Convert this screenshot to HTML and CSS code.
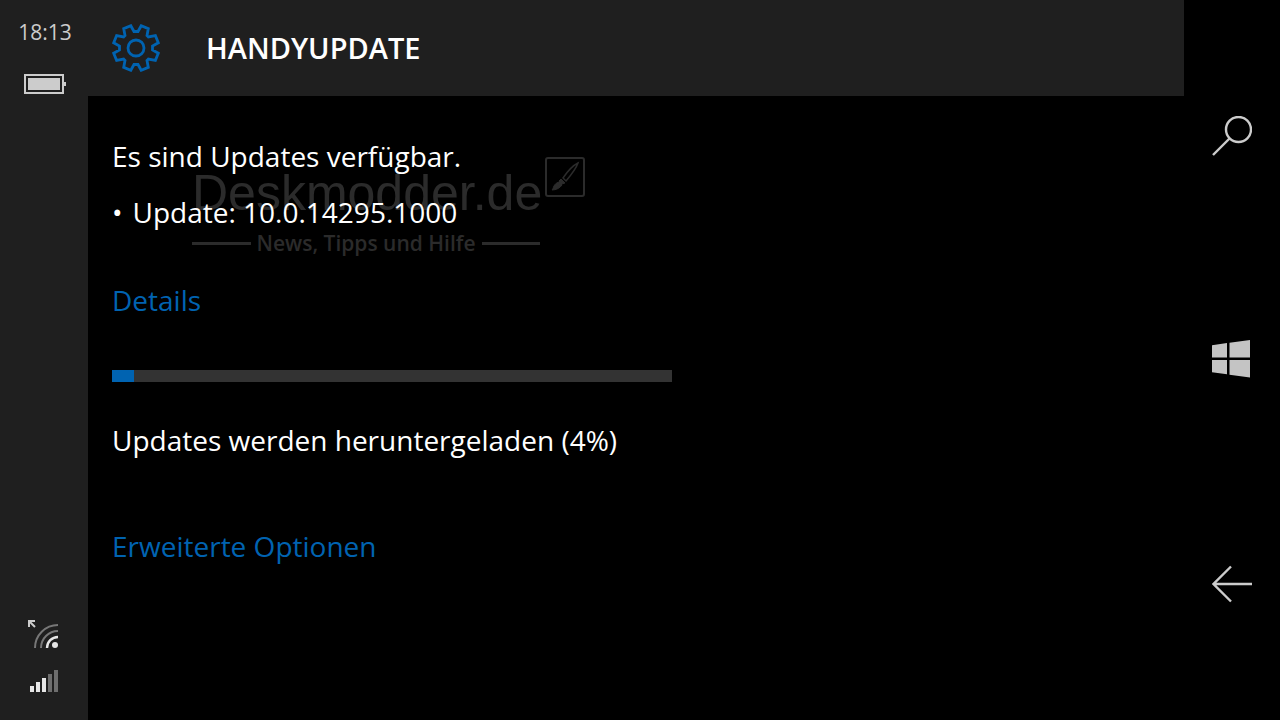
FILE: index.html
```html
<!DOCTYPE html>
<html lang="de">
<head>
    <meta charset="UTF-8">
    <meta name="viewport" content="width=device-width, initial-scale=1.0">
    <title>Handyupdate</title>
    <link rel="stylesheet" href="styles.css">
</head>
<body>
    <aside id="status-bar">
        <div class="status-group">
            <time>18:13</time>
            <svg width="42" height="20" viewBox="0 0 42 20" fill="#ccc" role="img" aria-label="Akku">
                <path d="M0 0H40V20H0ZM2 2V18H38V2Z" fill-rule="evenodd"/>
                <rect x="4" y="4" width="32" height="12"/>
                <rect x="40" y="8" width="2" height="4"/>
            </svg>
        </div>
        <div class="status-group">
            <svg width="32" height="30" viewBox="0 0 32 30" fill="none" stroke-width="2" role="img" aria-label="WLAN">
                <path d="M7 28A23 23 0 0 1 30 5M13 28A17 17 0 0 1 30 11" stroke="#777"/>
                <path d="M19 28A11 11 0 0 1 30 17" stroke="#e6e6e6" stroke-width="2.4"/>
                <circle cx="27" cy="25" r="3" fill="#e6e6e6"/>
                <path d="M1 7V1H7M1 1L7 7" stroke="#ccc"/>
            </svg>
            <svg width="28" height="22" viewBox="0 0 28 22" role="img" aria-label="Mobilfunk">
                <path d="M0 16H4V22H0ZM6 12H10V22H6ZM12 8H16V22H12Z" fill="#e6e6e6"/>
                <path d="M18 4H22V22H18ZM24 0H28V22H24Z" fill="#6e6e6e"/>
            </svg>
        </div>
    </aside>

    <div id="page">
        <header>
            <svg width="48" height="48" viewBox="-24 -24 48 48" fill="none" stroke="#0063b1" stroke-width="2.8" aria-hidden="true">
                <path d="M2 -16.5L5.2 -22.3L12.3 -19.4L11 -12.4L12.4 -11L19.4 -12.3L22.3 -5.2L16.5 -2V2L22.3 5.2L19.4 12.3L12.4 11L11 12.4L12.3 19.4L5.2 22.3L2 16.5H-2L-5.2 22.3L-12.3 19.4L-11 12.4L-12.4 11L-19.4 12.3L-22.3 5.2L-16.5 2V-2L-22.3 -5.2L-19.4 -12.3L-12.4 -11L-11 -12.4L-12.3 -19.4L-5.2 -22.3L-2 -16.5Z"/>
                <circle r="8"/>
            </svg>
            <h1>HANDYUPDATE</h1>
        </header>

        <main>
            <div id="watermark">
                <div class="brand">Deskmodder.de</div>
                <div class="slogan">News, Tipps und Hilfe</div>
                <svg width="40" height="40" viewBox="0 0 40 40" fill="none" stroke="#2b2b2b" aria-hidden="true">
                    <rect x="1" y="1" width="38" height="38" rx="2" stroke-width="2"/>
                    <path d="M33 6C27 9 22 15 18 21L21 24C26 18 31 12 33 6Z" stroke-width="1.5"/>
                    <path d="M16 22L20 26L17 27L14 24Z" fill="#2b2b2b"/>
                    <path d="M14 25L17 28C15 31 11 33 7 33C9 31 8 27 14 25Z" fill="#2b2b2b"/>
                </svg>
            </div>

            <p>Es sind Updates verfügbar.</p>
            <ul>
                <li>Update: 10.0.14295.1000</li>
            </ul>
            <a class="details" href="#details">Details</a>
            <progress id="download" value="4" max="100"></progress>
            <label for="download">Updates werden heruntergeladen (4%)</label>
            <a class="options" href="#optionen">Erweiterte Optionen</a>
        </main>
    </div>

    <nav>
        <button type="button" aria-label="Suchen">
            <svg width="40" height="40" viewBox="0 0 40 40" fill="none" stroke="#ccc" stroke-width="2.4">
                <circle cx="26.5" cy="13.5" r="12.5"/>
                <path d="M17.5 22.5L1 39"/>
            </svg>
        </button>
        <button type="button" aria-label="Start">
            <svg width="40" height="40" viewBox="0 0 40 40" fill="#c4c4c4">
                <path d="M0 5.2L15 3V17.5H0ZM17.5 2.7L38 0V17.5H17.5ZM0 20H15V34.3L0 32.2ZM17.5 20H38V37.5L17.5 34.7Z"/>
            </svg>
        </button>
        <button type="button" aria-label="Zurück">
            <svg width="40" height="40" viewBox="0 0 40 40" fill="none" stroke="#ccc" stroke-width="2.4">
                <path d="M40 20H2M19 2.5L1.5 20L19 37.5"/>
            </svg>
        </button>
    </nav>
</body>
</html>
```
FILE: styles.css
```css
* {
    box-sizing: border-box;
}
body {
    display: grid;
    grid-template-columns: 88px 1fr 96px;
    min-height: 100vh;
    margin: 0;
    background-color: #000;
    color: #fff;
    font-family: "Segoe UI", "Open Sans", "Noto Sans", sans-serif;
    font-size: 28px;
    line-height: 40px;
}
svg {
    display: block;
}

/* Left status bar */
#status-bar {
    display: flex;
    flex-direction: column;
    justify-content: space-between;
    padding: 12px 0 28px 2px;
    background-color: #1f1f1f;
}
.status-group {
    display: flex;
    flex-direction: column;
    align-items: center;
    gap: 22px;
}
#status-bar time {
    color: #ccc;
    font-size: 21px;
}
.status-group:last-child {
    align-items: flex-end;
    gap: 20px;
    padding-right: 30px;
}
.status-group:last-child svg:first-child {
    margin-right: -2px;
}

/* Content */
header {
    display: flex;
    align-items: center;
    gap: 46px;
    height: 96px;
    padding: 0 24px;
    background-color: #1f1f1f;
}
h1 {
    margin: 0;
    font-size: 29px;
    font-weight: 600;
}
main {
    position: relative;
    z-index: 0;
    display: flex;
    flex-direction: column;
    align-items: flex-start;
    padding: 40px 24px;
}
main p {
    margin: 0 0 16px;
}
main ul {
    margin: 0 0 48px;
    padding: 0;
    list-style: none;
}
main li {
    display: flex;
    gap: 10px;
}
main li::before {
    content: "•";
}
a {
    color: #0063b1;
    text-decoration: none;
}
.details {
    margin-bottom: 50px;
}
progress {
    display: block;
    width: 560px;
    max-width: 100%;
    height: 12px;
    margin-bottom: 38px;
    border: none;
    background-color: #333;
    appearance: none;
}
progress::-webkit-progress-bar {
    background-color: #333;
}
progress::-webkit-progress-value {
    background-color: #0063b1;
}
.options {
    margin-top: 66px;
}

/* Watermark behind the text */
#watermark {
    position: absolute;
    z-index: -1;
    top: 61px;
    left: 104px;
    display: grid;
    grid-template-columns: 348px 40px;
    column-gap: 5px;
    color: #2b2b2b;
}
.brand {
    font-family: "Liberation Sans", Arial, sans-serif;
    font-size: 50px;
    line-height: 72px;
    white-space: nowrap;
}
.slogan {
    grid-row: 2;
    display: flex;
    align-items: center;
    gap: 6px;
    font-size: 21px;
    font-weight: 600;
    line-height: 28px;
    white-space: nowrap;
}
.slogan::before,
.slogan::after {
    content: "";
    flex: 1;
    height: 3px;
    background-color: #2b2b2b;
}

/* Right navigation bar */
nav {
    display: flex;
    flex-direction: column;
    padding: 24px 0;
}
nav button {
    flex: 1;
    display: flex;
    align-items: center;
    justify-content: center;
    padding: 0;
    border: none;
    background: none;
    cursor: pointer;
}
```
